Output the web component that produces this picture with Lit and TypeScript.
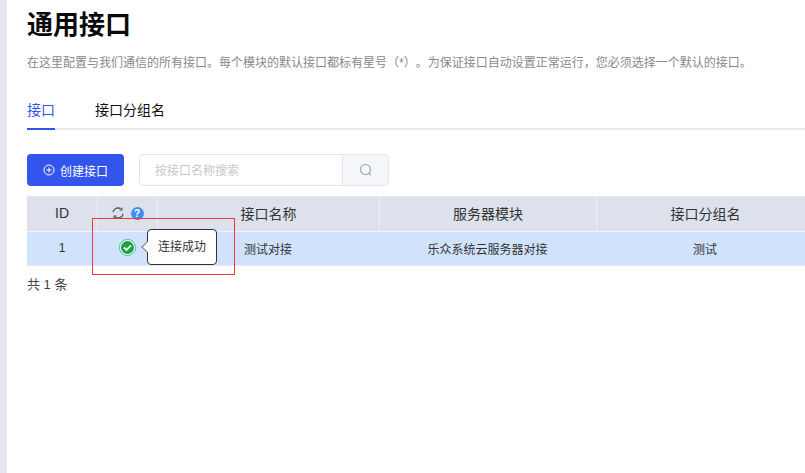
import { LitElement, html, css } from "lit";
import { customElement } from "lit/decorators.js";

@customElement("app-root")
export class AppRoot extends LitElement {
  static styles = css`
    :host {
      display: block;
      width: 805px;
      height: 473px;
      overflow: hidden;
      position: relative;
      background: #fff;
      font-family: "Liberation Sans", "Noto Sans CJK SC", sans-serif;
      color: #333;
    }
    .page { margin-left: 7px; padding-left: 20px; height: 473px; box-sizing: border-box; }
    .strip { position: absolute; left: 0; top: 0; bottom: 0; width: 7px; background: #e4e8ee; }
    h1 { margin: 0; padding-top: 10px; height: 30px; line-height: 30px; font-size: 26px; font-weight: 700; color: #0a0a0a; }
    .desc { margin: 13px 0 0; height: 20px; line-height: 20px; font-size: 12px; color: #86898f; white-space: nowrap; text-spacing-trim: space-all; }
    .tabs { display: flex; margin-top: 23px; height: 32px; border-bottom: 2px solid #e4e8ee; width: 800px; }
    .tab { font-size: 14px; line-height: 28px; height: 32px; box-sizing: border-box; color: #111; margin-right: 40px; }
    .tab.on { color: #3355ee; border-bottom: 2px solid #3355ee; height: 34px; }
    .tools { display: flex; gap: 15px; margin-top: 24px; }
    .btn { width: 97px; height: 32px; border-radius: 4px; background: #3355ee; color: #fff; font-size: 12px; display: flex; align-items: center; justify-content: center; gap: 5px; }
    .search { display: flex; width: 250px; height: 32px; box-sizing: border-box; border: 1px solid #e2e5ec; border-radius: 4px; overflow: hidden; }
    .search .input { flex: 1; padding-left: 15px; font-size: 12px; line-height: 32px; color: #c6c8cd; }
    .search .go { width: 45px; background: #f5f6fa; border-left: 1px solid #e2e5ec; display: flex; align-items: center; justify-content: center; }
    .table { margin-top: 10px; width: 787px; display: grid; grid-template-columns: 70px 60px 222px 217px 218px; font-size: 12px; }
    .th { height: 35px; padding-bottom: 2px; background: #dce1ec; border-left: 1px solid #eceff5; border-top: 1px solid #e6e9f0; box-sizing: border-box; display: flex; align-items: center; justify-content: center; font-size: 14px; color: #333; gap: 7px; }
    .th:first-child { border-left: 0; }
    .td { height: 35px; padding-bottom: 1px; background: #d1e2fd; border-top: 1px solid #f0f3fa; border-bottom: 1px solid #e6eaf2; box-sizing: border-box; display: flex; align-items: center; justify-content: center; color: #333; }
    .num { font-size: 12px; }
    .check { margin-bottom: 2px; }
    .help { width: 13px; height: 13px; border-radius: 50%; background: #3f8ff7; color: #fff; font-size: 10px; font-weight: 700; line-height: 13px; text-align: center; }
    .total { margin-top: 10px; font-size: 13px; line-height: 18px; color: #444; }
    .tip { position: absolute; left: 147px; top: 229px; width: 70px; height: 36px; box-sizing: border-box; background: #fff; border: 1px solid #333; border-radius: 4px; font-size: 12px; line-height: 34px; text-align: center; color: #333; }
    .tip::before { content: ""; position: absolute; left: -5px; top: 13px; width: 8px; height: 8px; box-sizing: border-box; background: #fff; border-left: 1px solid #777; border-bottom: 1px solid #777; transform: rotate(45deg); }
    .red { position: absolute; left: 92px; top: 218px; width: 143px; height: 57px; box-sizing: border-box; border: 1px solid #ee3a3a; }
  `;

  render() {
    return html`
      <div class="strip"></div>
      <div class="page">
        <h1>通用接口</h1>
        <p class="desc">在这里配置与我们通信的所有接口。每个模块的默认接口都标有星号（*）。为保证接口自动设置正常运行，您必须选择一个默认的接口。</p>
        <div class="tabs">
          <div class="tab on">接口</div>
          <div class="tab">接口分组名</div>
        </div>
        <div class="tools">
          <div class="btn">
            <svg width="12" height="12" viewBox="0 0 12 12" fill="none" stroke="#fff" stroke-width="1"><circle cx="6" cy="6" r="5"/><path d="M3.5 6h5M6 3.5v5"/></svg>
            <span>创建接口</span>
          </div>
          <div class="search">
            <div class="input">按接口名称搜索</div>
            <div class="go">
              <svg width="14" height="14" viewBox="0 0 14 14" fill="none" stroke="#9aa2ad" stroke-width="1.1"><circle cx="6.5" cy="6.5" r="5"/><path d="M10 10.5l2 1.5"/></svg>
            </div>
          </div>
        </div>
        <div class="table">
          <div class="th">ID</div>
          <div class="th">
            <svg width="12" height="12" viewBox="0 0 12 12" fill="none" stroke="#444" stroke-width="1.1"><path d="M1 5.2A5 5 0 0 1 8.6 1.7M11 6.8A5 5 0 0 1 3.4 10.3"/><path d="M9.9 .6v2.4H7.6M2.1 11.4V9h2.3"/></svg>
            <span class="help">?</span>
          </div>
          <div class="th">接口名称</div>
          <div class="th">服务器模块</div>
          <div class="th">接口分组名</div>
          <div class="td num">1</div>
          <div class="td">
            <svg class="check" width="17" height="17" viewBox="0 0 17 17"><circle cx="8.5" cy="8.5" r="8" fill="#fff" stroke="#2fc58a"/><circle cx="8.5" cy="8.5" r="6.5" fill="#1d9f45"/><path d="M5 8.5l2.5 2.4 4.5-4.4" fill="none" stroke="#fff" stroke-width="1.8"/></svg>
          </div>
          <div class="td">测试对接</div>
          <div class="td">乐众系统云服务器对接</div>
          <div class="td">测试</div>
        </div>
        <div class="total">共 1 条</div>
      </div>
      <div class="tip">连接成功</div>
      <div class="red"></div>
    `;
  }
}
